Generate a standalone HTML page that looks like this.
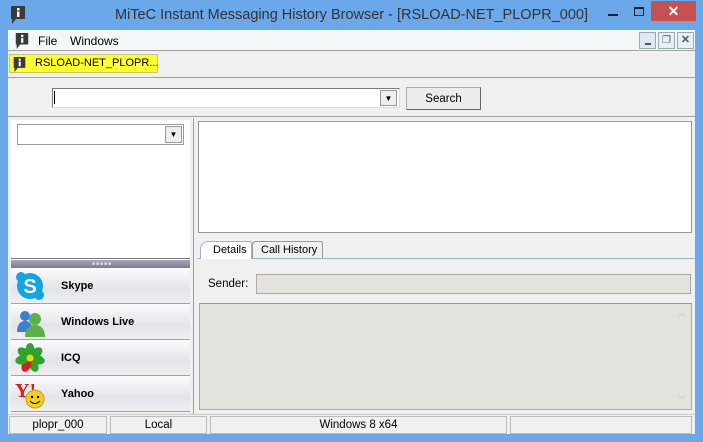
<!DOCTYPE html>
<html><head><meta charset="utf-8"><style>
*{box-sizing:border-box;margin:0;padding:0}
body{width:703px;height:442px;background:#6aa8ea;font-family:"Liberation Sans",sans-serif;font-size:11px;color:#000;position:relative;overflow:hidden}
.a{position:absolute}
.t{font-family:"Liberation Sans",sans-serif;font-size:11.5px}
.btn{background:linear-gradient(#fbfbfc,#e3e4ea 60%,#eeeef2);border-bottom:1px solid #a0a0a8}
.btn span{position:absolute;left:50px;top:12px;font-weight:bold;font-size:11px;font-family:"Liberation Sans",sans-serif}
</style></head><body>
<svg class="a" style="left:9px;top:5px" width="18" height="20" viewBox="0 0 18 20"><path d="M2 1h14v13H7l-4 5v-5H2z" fill="#3a3a3a"/><rect x="8" y="3" width="2.5" height="2.5" fill="#fff"/><rect x="8" y="6.5" width="2.5" height="5.5" fill="#fff"/></svg>
<div class="a" style="left:0;width:703px;top:7px;text-align:center;font-size:14.5px;color:#333;font-family:'Liberation Sans',sans-serif">MiTeC Instant Messaging History Browser - [RSLOAD-NET_PLOPR_000]</div>
<div class="a" style="left:608px;top:14px;width:10px;height:2px;background:#222"></div>
<div class="a" style="left:634px;top:7px;width:10px;height:9px;border:1px solid #222;border-top-width:2px"></div>
<div class="a" style="left:651px;top:1px;width:45px;height:20px;background:#c75050;color:#fff;text-align:center;font-size:14px;line-height:20px;font-weight:bold">✕</div>
<div class="a" style="left:8px;top:30px;width:687px;height:404px;background:#f0f0f0"></div>
<div class="a" style="left:8px;top:30px;width:687px;height:21px;background:#f5f6f7;border-bottom:1px solid #a0a0a0"></div>
<svg class="a" style="left:14px;top:32px" width="16" height="18" viewBox="0 0 18 20"><path d="M2 1h14v13H7l-4 5v-5H2z" fill="#3a3a3a"/><rect x="8" y="3" width="2.5" height="2.5" fill="#fff"/><rect x="8" y="6.5" width="2.5" height="5.5" fill="#fff"/></svg>
<div class="a t" style="left:38px;top:34px;font-size:12px">File</div>
<div class="a t" style="left:70px;top:34px;font-size:12px">Windows</div>
<div class="a" style="left:639px;top:32px;width:17px;height:17px;border:1px solid #9aa;background:#dde8f3"><div class="a" style="left:5px;top:10px;width:6px;height:2px;background:#555"></div></div>
<div class="a" style="left:658px;top:32px;width:17px;height:17px;border:1px solid #9aa;background:#e7eef5;font-size:10px;text-align:center;line-height:15px;color:#555">❐</div>
<div class="a" style="left:677px;top:32px;width:17px;height:17px;border:1px solid #9aa;background:#e7eef5;font-size:11px;text-align:center;line-height:15px;color:#555;font-weight:bold">✕</div>
<div class="a" style="left:9px;top:54px;width:149px;height:19px;background:#ffff30;border:1px solid #c8c870"></div>
<svg class="a" style="left:12px;top:56px" width="15" height="17" viewBox="0 0 18 20"><path d="M2 1h14v13H7l-4 5v-5H2z" fill="#3a3a3a"/><rect x="8" y="3" width="2.5" height="2.5" fill="#fff"/><rect x="8" y="6.5" width="2.5" height="5.5" fill="#fff"/></svg>
<div class="a t" style="left:35px;top:57px;font-size:11px">RSLOAD-NET_PLOPR...</div>
<div class="a" style="left:8px;top:77px;width:687px;height:1px;background:#a0a0a0"></div>
<div class="a" style="left:52px;top:88px;width:348px;height:20px;background:#fff;border:1px solid #7a7a7a;border-right-color:#ddd;border-bottom-color:#ddd"></div>
<div class="a" style="left:54px;top:91px;width:1px;height:13px;background:#000"></div>
<div class="a" style="left:380px;top:90px;width:17px;height:16px;background:#eee;border:1px solid #999;font-size:8px;text-align:center;line-height:15px">▼</div>
<div class="a" style="left:406px;top:87px;width:75px;height:23px;background:#ececec;border:1px solid #aaa;border-right-color:#666;border-bottom-color:#666;text-align:center;line-height:23px"><span class="t">Search</span></div>
<div class="a" style="left:8px;top:116px;width:687px;height:1px;background:#a0a0a0"></div>
<div class="a" style="left:11px;top:120px;width:179px;height:140px;background:#fff"></div>
<div class="a" style="left:17px;top:124px;width:167px;height:21px;background:#fff;border:1px solid #999"></div>
<div class="a" style="left:165px;top:126px;width:17px;height:17px;background:#eee;border:1px solid #999;font-size:8px;text-align:center;line-height:16px">▼</div>
<div class="a" style="left:11px;top:258px;width:179px;height:1px;background:#777"></div>
<div class="a" style="left:11px;top:260px;width:179px;height:8px;background:linear-gradient(#a9a7bd,#7c7994)"><div class="a" style="left:81px;top:1px;font-size:5px;color:#ddd;letter-spacing:1px">■■■■■</div></div>
<div class="a btn" style="left:11px;top:268px;width:179px;height:36px"><svg class="a" style="left:4px;top:3px" width="30" height="30" viewBox="0 0 30 30"><circle cx="15" cy="15" r="13" fill="#12a5e6"/><circle cx="6" cy="6" r="5" fill="#12a5e6"/><circle cx="24" cy="24" r="5" fill="#12a5e6"/><text x="15" y="22" font-size="20" font-weight="bold" fill="#fff" text-anchor="middle" font-family="Liberation Sans">S</text></svg><span>Skype</span></div>
<div class="a btn" style="left:11px;top:304px;width:179px;height:36px"><svg class="a" style="left:4px;top:4px" width="32" height="30"><circle cx="10" cy="8" r="5" fill="#3a7fd0"/><path d="M2 24c0-8 4-11 8-11s8 3 8 11z" fill="#3a7fd0"/><circle cx="20" cy="11" r="6" fill="#5bb04a"/><path d="M10 29c0-9 5-12 10-12s10 3 10 12z" fill="#5bb04a"/></svg><span>Windows Live</span></div>
<div class="a btn" style="left:11px;top:340px;width:179px;height:36px"><svg class="a" style="left:4px;top:3px" width="30" height="30" viewBox="-15 -15 30 30"><g fill="#2da52a"><ellipse rx="4.5" ry="7" cy="-8"/><ellipse rx="4.5" ry="7" cy="-8" transform="rotate(51)"/><ellipse rx="4.5" ry="7" cy="-8" transform="rotate(103)"/><ellipse rx="4.5" ry="7" cy="-8" transform="rotate(154)"/><ellipse rx="4.5" ry="7" cy="-8" transform="rotate(206)" fill="#d62020"/><ellipse rx="4.5" ry="7" cy="-8" transform="rotate(257)"/><ellipse rx="4.5" ry="7" cy="-8" transform="rotate(309)"/></g><circle r="3.5" fill="#f2d500"/></svg><span>ICQ</span></div>
<div class="a btn" style="left:11px;top:376px;width:179px;height:36px"><svg class="a" style="left:4px;top:3px" width="32" height="32"><text x="0" y="18" font-size="20" font-weight="bold" fill="#d2201c" font-family="Liberation Serif">Y!</text><circle cx="20" cy="20" r="9" fill="#f5d020" stroke="#c9a000"/><circle cx="17" cy="18" r="1.2"/><circle cx="23" cy="18" r="1.2"/><path d="M15 22q5 5 10 0" stroke="#000" fill="none"/></svg><span>Yahoo</span></div>
<div class="a" style="left:193px;top:118px;width:1px;height:296px;background:#a0a0a0"></div>
<div class="a" style="left:198px;top:121px;width:494px;height:112px;background:#fff;border:1px solid #999"></div>
<div class="a" style="left:197px;top:258px;width:498px;height:1px;background:#99b4d1"></div>
<div class="a" style="left:200px;top:241px;width:52px;height:18px;background:#fff;border:1px solid #99b4d1;border-bottom:none;border-radius:8px 2px 0 0"></div>
<div class="a t" style="left:213px;top:244px;font-size:11px">Details</div>
<div class="a" style="left:252px;top:241px;width:71px;height:17px;background:#f0f0f0;border:1px solid #999;border-bottom:none;border-radius:4px 2px 0 0"></div>
<div class="a t" style="left:261px;top:244px;font-size:11px">Call History</div>
<div class="a t" style="left:208px;top:278px">Sender:</div>
<div class="a" style="left:256px;top:274px;width:435px;height:20px;background:#e3e2dd;border:1px solid #aaa"></div>
<div class="a" style="left:199px;top:303px;width:493px;height:107px;background:#e3e2dd;border:1px solid #aaa;border-top-color:#999"></div>
<div class="a" style="left:678px;top:308px;font-size:8px;color:#bbb">︿</div>
<div class="a" style="left:678px;top:394px;font-size:8px;color:#bbb">﹀</div>
<div class="a" style="left:8px;top:414px;width:687px;height:20px;background:#f0f0f0;border-top:1px solid #ccc"></div>
<div class="a" style="left:9px;top:416px;width:98px;height:18px;border:1px solid #bbb;text-align:center;line-height:17px"><span class="t">plopr_000</span></div>
<div class="a" style="left:110px;top:416px;width:97px;height:18px;border:1px solid #bbb;text-align:center;line-height:17px"><span class="t">Local</span></div>
<div class="a" style="left:210px;top:416px;width:297px;height:18px;border:1px solid #bbb;text-align:center;line-height:17px"><span class="t">Windows 8 x64</span></div>
<div class="a" style="left:510px;top:416px;width:182px;height:18px;border:1px solid #bbb"></div>
</body></html>
